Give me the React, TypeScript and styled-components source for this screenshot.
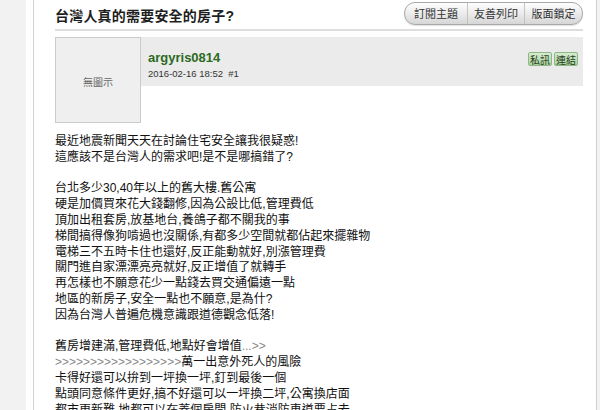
import React from 'react'
import styled, { createGlobalStyle } from 'styled-components'

const GlobalStyle = createGlobalStyle`
    html, body {
        margin: 0;
        padding: 0;
        background: #ffffff;
        overflow: hidden;
    }
    body {
        font-family: "Liberation Sans", "Noto Sans CJK TC", sans-serif;
        color: #222222;
    }
`

const Page = styled.div`
    display: flex;
    width: 600px;
    height: 410px;
    overflow: hidden;
`
const Rail = styled.div<{ $width?: number }>`
    flex: ${p => (p.$width ? `0 0 ${p.$width}px` : '1 1 auto')};
    background: #f2f2f2;
`
const Main = styled.div`
    box-sizing: border-box;
    flex: 0 0 564px;
    margin-left: 7px;
    border-left: 1px solid #d2d2d2;
    border-right: 1px solid #cfcfcf;
    padding: 0 13px 0 21px;
`
const Header = styled.div`
    display: flex;
    align-items: center;
    justify-content: space-between;
    height: 29px;
    border-bottom: 2px solid #dedede;
`
const Title = styled.h1`
    margin: 0;
    font-size: 14px;
    font-weight: 600;
    color: #1e1e1e;
    letter-spacing: 0.2px;
`
const ToolGroup = styled.div`
    display: flex;
    height: 21px;
    margin-top: -3px;
    border: 1px solid #a8a8a8;
    border-radius: 11px;
    overflow: hidden;
    background: linear-gradient(#fefefe, #e9e9e9 55%, #d6d6d6);
    box-shadow: 0 1px 1px rgba(0, 0, 0, 0.12);
`
const ToolButton = styled.div<{ $width: number }>`
    display: flex;
    align-items: center;
    justify-content: center;
    width: ${p => p.$width}px;
    font-size: 11px;
    color: #333333;
    & + & {
        border-left: 1px solid #c3c3c3;
    }
`
const Post = styled.div`
    margin-top: 6px;
`
const PostHead = styled.div`
    display: flex;
    align-items: flex-start;
`
const Avatar = styled.div`
    box-sizing: border-box;
    flex: 0 0 86px;
    height: 86px;
    display: flex;
    align-items: center;
    justify-content: center;
    border: 1px solid #cbcbcb;
    background: #efefef;
    font-size: 10px;
    color: #666666;
    padding-top: 2px;
`
const UserBar = styled.div`
    flex: 1;
    height: 49px;
    display: flex;
    justify-content: space-between;
    background: #ebebeb;
    padding: 0 5px 0 7px;
`
const UserInfo = styled.div`
    display: flex;
    flex-direction: column;
    padding-top: 13px;
`
const UserName = styled.div`
    font-size: 13px;
    font-weight: bold;
    color: #2b6a1f;
    line-height: 15px;
`
const PostMeta = styled.div`
    margin-top: 3px;
    font-size: 9.5px;
    color: #333333;
    line-height: 12px;
`
const Actions = styled.div`
    display: flex;
    gap: 2px;
    margin-top: 15px;
`
const GreenButton = styled.div`
    box-sizing: border-box;
    width: 24px;
    height: 14px;
    display: flex;
    align-items: center;
    justify-content: center;
    border: 1px solid #8db784;
    border-radius: 2px;
    background: linear-gradient(#d6ecd0, #a9d39e);
    font-size: 10px;
    color: #2a3d24;
`
const Body = styled.div`
    margin-top: 11px;
    font-size: 12px;
    line-height: 15.8px;
    color: #111111;
    white-space: nowrap;
`
const Line = styled.div`
    min-height: 15.8px;
`
const Dim = styled.span`
    color: #888888;
`

const lines: React.ReactNode[] = [
    '最近地震新聞天天在討論住宅安全讓我很疑惑!',
    '這應該不是台灣人的需求吧!是不是哪搞錯了?',
    '',
    '台北多少30,40年以上的舊大樓.舊公寓',
    '硬是加價買來花大錢翻修,因為公設比低,管理費低',
    '頂加出租套房,放基地台,養鴿子都不關我的事',
    '梯間搞得像狗啃過也沒關係,有都多少空間就都佔起來擺雜物',
    '電梯三不五時卡住也還好,反正能動就好,別漲管理費',
    '關門進自家漂漂亮亮就好,反正增值了就轉手',
    '再怎樣也不願意花少一點錢去買交通偏遠一點',
    '地區的新房子,安全一點也不願意,是為什?',
    '因為台灣人普遍危機意識跟道德觀念低落!',
    '',
    <>舊房增建滿,管理費低,地點好會增值<Dim>...&gt;&gt;</Dim></>,
    <><Dim>{'>'.repeat(18)}</Dim>萬一出意外死人的風險</>,
    '卡得好還可以拚到一坪換一坪,釘到最後一個',
    '點頭同意條件更好,搞不好還可以一坪換二坪,公寓換店面',
    '都市更新難,地都可以在蓋個房間,防火巷消防車道要占去'
]

export default function App() {
    return (
        <Page>
            <GlobalStyle />
            <Rail $width={26} />
            <Main>
                <Header>
                    <Title>台灣人真的需要安全的房子?</Title>
                    <ToolGroup>
                        <ToolButton $width={62}>訂閱主題</ToolButton>
                        <ToolButton $width={56}>友善列印</ToolButton>
                        <ToolButton $width={57}>版面鎖定</ToolButton>
                    </ToolGroup>
                </Header>
                <Post>
                    <PostHead>
                        <Avatar>無圖示</Avatar>
                        <UserBar>
                            <UserInfo>
                                <UserName>argyris0814</UserName>
                                <PostMeta>2016-02-16 18:52 &nbsp;#1</PostMeta>
                            </UserInfo>
                            <Actions>
                                <GreenButton>私訊</GreenButton>
                                <GreenButton>連結</GreenButton>
                            </Actions>
                        </UserBar>
                    </PostHead>
                    <Body>
                        {lines.map((l, i) => (
                            <Line key={i}>{l === '' ? '\u00a0' : l}</Line>
                        ))}
                    </Body>
                </Post>
            </Main>
            <Rail />
        </Page>
    )
}
